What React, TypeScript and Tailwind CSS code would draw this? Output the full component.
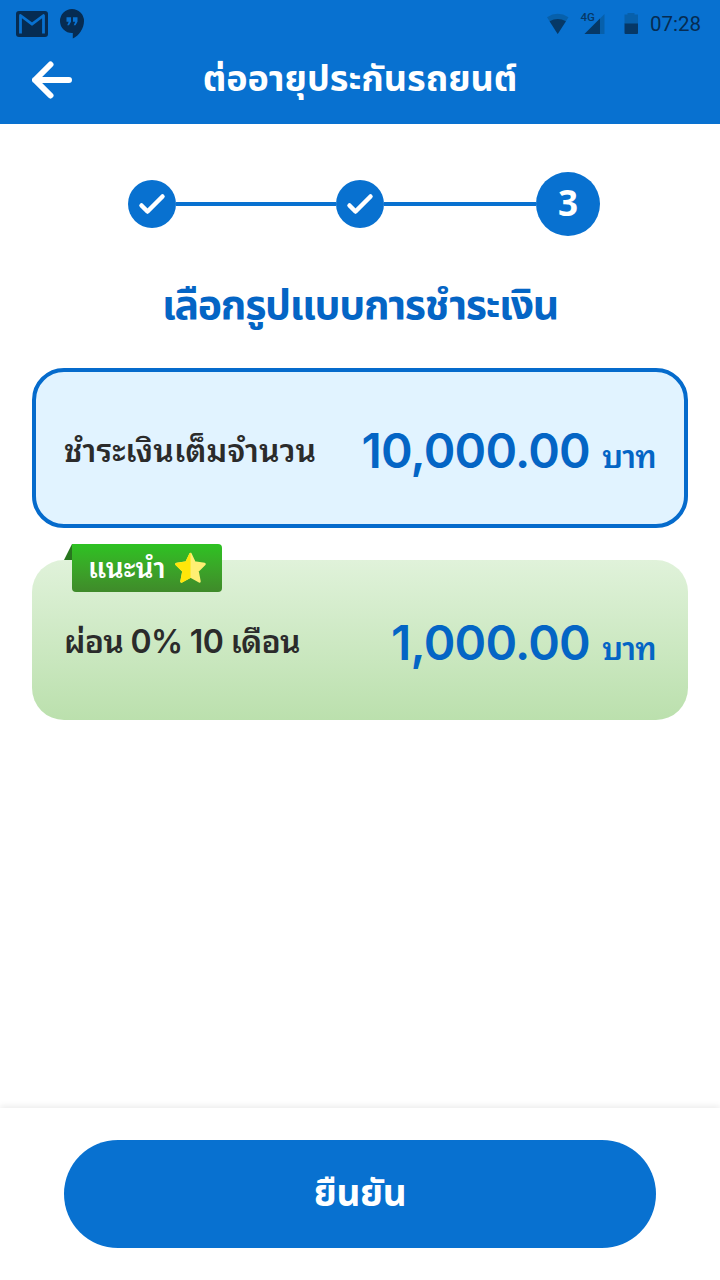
type StepState = "done" | "current";

const STEPS: { id: number; state: StepState }[] = [
  { id: 1, state: "done" },
  { id: 2, state: "done" },
  { id: 3, state: "current" },
];

function StatusBar() {
  return (
    <div className="flex h-12 items-center justify-between pr-[19px] pl-4 text-[#062c52]">
      <div className="flex items-center gap-3">
        <svg className="h-[26px] w-8" viewBox="0 0 32 26">
          <rect width="32" height="26" rx="3" fill="currentColor" />
          <path
            d="M4.500 22.500V4.500L16 13.200L27.500 4.500V22.500"
            fill="none"
            stroke="#0871d0"
            strokeWidth="2.800"
            strokeLinejoin="round"
          />
        </svg>
        <svg className="h-[30px] w-6" viewBox="0 0 24 30">
          <path
            d="M12 0a12 12 0 0 0 0 24h.8v5.6C19 26.600 24 19.500 24 12A12 12 0 0 0 12 0z"
            fill="currentColor"
          />
          <path
            d="M6.500 8.300h4.500v4.500l-2 3.500H7.200l1.500-3.500H6.500zM13 8.300h4.500v4.500l-2 3.500h-1.800l1.500-3.500H13z"
            fill="#0871d0"
          />
        </svg>
      </div>

      <div className="flex items-center">
        <svg className="h-[30px] w-[100px]" viewBox="0 -3 100 30">
          {/* wifi */}
          <path d="M0 5.200Q10.700-1.500 21.500 5.200L10.700 22z" fill="#0760ab" />
          <path d="M2.600 9.300Q10.700 4.500 18.900 9.300L10.700 22z" fill="#063866" />
          {/* mobile signal */}
          <path d="M37.500 22L57.500 2V22z" fill="#0760ab" />
          <path d="M37.500 22L53 6.500V22z" fill="#063866" />
          {/* battery */}
          <path d="M77.500 2.500h3V1h7v1.500h3.500V12h-13.500z" fill="#0760ab" />
          <path d="M77.500 11.500h13.500v9.500a1 1 0 0 1-1 1h-11.500a1 1 0 0 1-1-1z" fill="#063866" />
          <path d="M33 0h16v9.500H33z" fill="#0871d0" />
          <text
            x="33.500"
            y="9"
            className="font-[Roboto] text-[11.500px] font-medium"
            fill="#063866"
          >
            4G
          </text>
        </svg>
        <span className="ml-[3px] font-[Roboto,sans-serif] text-[20.500px] leading-6">07:28</span>
      </div>
    </div>
  );
}

function Stepper() {
  return (
    <div className="mt-12 flex h-16 items-center justify-center pl-2">
      {STEPS.map((step, i) => (
        <div key={step.id} className="flex items-center">
          {i > 0 && (
            <div
              className={
                step.state === "current" ? "h-1 w-[152px] bg-[#0871d0]" : "h-1 w-40 bg-[#0871d0]"
              }
            />
          )}
          {step.state === "done" ? (
            <div className="flex size-12 items-center justify-center rounded-full bg-[#0871d0]">
              <svg className="size-12" viewBox="0 0 48 48" fill="none" stroke="white">
                <path
                  d="M13.500 25.500L19.500 31.500L34.500 16.500"
                  strokeWidth="4.500"
                  strokeLinecap="round"
                  strokeLinejoin="round"
                />
              </svg>
            </div>
          ) : (
            <div className="flex size-16 items-center justify-center rounded-full bg-[#0871d0] pt-0.5 font-['Noto_Sans_Thai','Noto_Sans',sans-serif] text-[35px] leading-none font-bold text-white">
              {step.id}
            </div>
          )}
        </div>
      ))}
    </div>
  );
}

function Amount({ value }: { value: string }) {
  return (
    <p className="flex items-baseline gap-3 pt-1.5 text-[#0465c5]">
      <span className="font-[Inter,sans-serif] text-[48px] leading-[60px] font-semibold tracking-[-0.8px]">
        {value}
      </span>
      <span className="font-['Noto_Sans_Thai_Looped','Noto_Sans',sans-serif] text-[32px] leading-none font-semibold tracking-[-0.8px]">
        บาท
      </span>
    </p>
  );
}

function Star() {
  return (
    <svg className="h-8 w-[33px]" viewBox="0 0 33 32">
      <path
        d="M16.500 2L20.500 10.500L30.500 12L23.500 19L25.500 29.500L16.500 24.500L7.500 29.500L9.500 19L2.500 12L12.500 10.500z"
        fill="#ffef73"
        stroke="#ffef73"
        strokeWidth="2.500"
        strokeLinejoin="round"
      />
      <path
        d="M16.500 1Q15.500 1 15.200 2L11.500 9.500L2 10.900Q.500 11.500 1.400 13L8.200 19.500L6.300 29.500Q6.500 31 8.200 30.600L16.500 25.900z"
        fill="#ffe60a"
      />
    </svg>
  );
}

export default function App() {
  return (
    <div className="flex h-[1280px] w-[720px] flex-col overflow-hidden bg-white font-['Noto_Sans_Thai','Noto_Sans',sans-serif]">
      <header className="h-[124px] bg-[#0871d0]">
        <StatusBar />
        <div className="grid h-16 grid-cols-[72px_1fr_72px] items-center">
          <svg className="ml-8 h-10 w-10" viewBox="0 0 40 40" fill="none" stroke="white">
            <path
              d="M18.500 4.500L3 20L18.500 35.500M3 20H37"
              strokeWidth="6"
              strokeLinecap="round"
              strokeLinejoin="round"
            />
          </svg>
          <h1 className="text-center text-[36px] leading-[60px] font-bold text-white">
            ต่ออายุประกันรถยนต์
          </h1>
        </div>
      </header>

      <main className="flex-1 px-8">
        <Stepper />
        <h2 className="mt-10 text-center text-[41px] leading-[60px] font-bold tracking-[-1.3px] text-[#0465c5]">
          เลือกรูปแบบการชำระเงิน
        </h2>

        <button className="mt-8 flex h-40 w-full items-center justify-between rounded-[32px] border-4 border-[#056bcc] bg-[#e1f3ff] px-7">
          <span className="font-['Noto_Sans_Thai_Looped','Noto_Sans',sans-serif] text-[32px] font-semibold tracking-[0.1px] text-[#2b2b2b]">
            ชำระเงินเต็มจำนวน
          </span>
          <Amount value="10,000.00" />
        </button>

        <button className="relative mt-8 flex h-40 w-full items-center justify-between rounded-[32px] bg-linear-to-b from-[#e0f2da] to-[#bbe0ad] px-8">
          <svg className="absolute top-[-16px] left-8 h-4 w-2" viewBox="0 0 8 16">
            <path d="M8 0V16H0z" fill="#28761f" />
          </svg>
          <span className="absolute top-[-16px] left-10 flex h-12 w-[150px] items-center gap-2 rounded-r-[4px] rounded-bl-[4px] bg-linear-to-b from-[#2dc222] to-[#3f8a2a] pl-4 font-['Noto_Sans_Thai_Looped','Noto_Sans',sans-serif] text-[28px] leading-none font-semibold text-white">
            <span className="pb-1">แนะนำ</span>
            <Star />
          </span>
          <span className="pt-1 font-[Inter,'Noto_Sans_Thai_Looped','Noto_Sans',sans-serif] text-[32px] font-semibold tracking-[-0.7px] text-[#2b2b2b]">
            ผ่อน 0% 10 เดือน
          </span>
          <Amount value="1,000.00" />
        </button>
      </main>

      <footer className="h-[172px] bg-white px-16 pt-8 shadow-[0_-2px_6px_rgba(0,0,0,0.08)]">
        <button className="flex h-[108px] w-full items-center justify-center rounded-full bg-[#0871d0] pt-0.5 text-[37px] leading-none font-bold tracking-[-0.3px] text-white">
          ยืนยัน
        </button>
      </footer>
    </div>
  );
}
